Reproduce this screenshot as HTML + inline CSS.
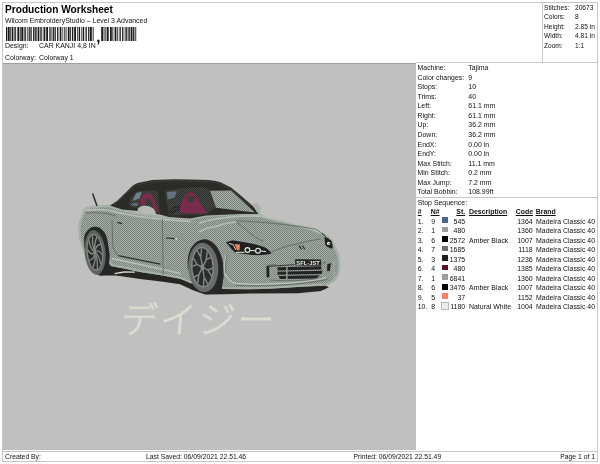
<!DOCTYPE html>
<html><head><meta charset="utf-8">
<style>
html,body{margin:0;padding:0;background:#fff;}
body{width:600px;height:464px;position:relative;overflow:hidden;font-family:"Liberation Sans",sans-serif;font-size:6.95px;color:#111;}
.t{position:absolute;white-space:nowrap;line-height:9px;}
.frame{position:absolute;left:2px;top:2px;width:596px;height:460px;border:1px solid #c8c8c8;box-sizing:border-box;}
.panel{position:absolute;left:3px;top:62.5px;width:413.3px;height:387.1px;background:#c0c0c0;border-top:1px solid #a0a0a0;box-sizing:border-box;}
.hl{position:absolute;height:1px;background:#c8c8c8;}
.vl{position:absolute;width:1px;background:#c8c8c8;}
h1{position:absolute;left:5px;top:3.7px;margin:0;font-size:10.15px;line-height:12px;font-weight:bold;color:#000;white-space:nowrap;}
.sw{position:absolute;width:6.5px;height:5.7px;}
.r{text-align:right;}
.s{font-size:6.6px;}
.f{font-size:6.8px;}
u{text-decoration:underline;}
b{font-weight:bold;}
#w{position:absolute;left:0;top:0;width:600px;height:464px;will-change:transform;}
</style></head><body><div id="w">
<div class="frame"></div>
<div class="panel"></div>
<h1>Production Worksheet</h1>
<div class="t" style="left:5px;top:15.5px">Wilcom EmbroideryStudio – Level 3 Advanced</div>
<div class="t" style="left:5px;top:41px">Design:</div><div class="t" style="left:39px;top:41px">CAR KANJI 4,8 IN</div>
<div class="t" style="left:5px;top:53px">Colorway:</div><div class="t" style="left:39px;top:53px">Colorway 1</div>
<!--STATIC-->
<svg style="position:absolute;left:0;top:0" width="150" height="46" viewBox="0 0 150 46"><g fill="#1a1a1a"><rect x="6.00" y="27" width="1.30" height="14"/><rect x="7.90" y="27" width="1.80" height="14"/><rect x="10.30" y="27" width="0.90" height="14"/><rect x="11.80" y="27" width="1.30" height="14"/><rect x="13.70" y="27" width="0.90" height="14"/><rect x="15.20" y="27" width="0.90" height="14"/><rect x="17.40" y="27" width="1.80" height="14"/><rect x="19.80" y="27" width="0.90" height="14"/><rect x="21.30" y="27" width="1.80" height="14"/><rect x="23.70" y="27" width="0.90" height="14"/><rect x="25.20" y="27" width="0.90" height="14"/><rect x="27.40" y="27" width="0.90" height="14"/><rect x="28.90" y="27" width="0.90" height="14"/><rect x="30.40" y="27" width="1.30" height="14"/><rect x="33.00" y="27" width="0.90" height="14"/><rect x="34.50" y="27" width="1.30" height="14"/><rect x="36.40" y="27" width="0.90" height="14"/><rect x="37.90" y="27" width="1.30" height="14"/><rect x="39.80" y="27" width="0.90" height="14"/><rect x="41.30" y="27" width="0.90" height="14"/><rect x="43.50" y="27" width="1.80" height="14"/><rect x="46.20" y="27" width="1.80" height="14"/><rect x="49.30" y="27" width="1.30" height="14"/><rect x="51.50" y="27" width="0.90" height="14"/><rect x="53.00" y="27" width="0.90" height="14"/><rect x="54.50" y="27" width="1.30" height="14"/><rect x="57.10" y="27" width="1.30" height="14"/><rect x="59.70" y="27" width="1.30" height="14"/><rect x="61.60" y="27" width="0.90" height="14"/><rect x="63.80" y="27" width="0.90" height="14"/><rect x="65.60" y="27" width="0.90" height="14"/><rect x="67.80" y="27" width="1.80" height="14"/><rect x="70.20" y="27" width="0.90" height="14"/><rect x="72.00" y="27" width="1.30" height="14"/><rect x="74.20" y="27" width="1.80" height="14"/><rect x="77.30" y="27" width="0.90" height="14"/><rect x="78.80" y="27" width="1.30" height="14"/><rect x="81.40" y="27" width="0.90" height="14"/><rect x="82.90" y="27" width="1.30" height="14"/><rect x="85.50" y="27" width="1.30" height="14"/><rect x="88.10" y="27" width="1.30" height="14"/><rect x="90.00" y="27" width="1.80" height="14"/><rect x="92.70" y="27" width="0.90" height="14"/><rect x="101.20" y="27" width="1.80" height="14"/><rect x="103.60" y="27" width="0.90" height="14"/><rect x="105.40" y="27" width="0.90" height="14"/><rect x="106.90" y="27" width="1.80" height="14"/><rect x="110.00" y="27" width="1.80" height="14"/><rect x="112.40" y="27" width="0.90" height="14"/><rect x="114.60" y="27" width="1.80" height="14"/><rect x="117.30" y="27" width="0.90" height="14"/><rect x="119.50" y="27" width="1.30" height="14"/><rect x="122.10" y="27" width="1.30" height="14"/><rect x="124.70" y="27" width="0.90" height="14"/><rect x="126.20" y="27" width="0.90" height="14"/><rect x="127.70" y="27" width="0.90" height="14"/><rect x="129.20" y="27" width="0.90" height="14"/><rect x="130.70" y="27" width="1.80" height="14"/><rect x="133.10" y="27" width="1.30" height="14"/><rect x="135.30" y="27" width="0.90" height="14"/></g></svg>
<div class="t" id="comma" style="left:96.2px;top:28.5px;font-size:15px;font-weight:bold;line-height:16px">,</div>

<div class="t" style="left:417.5px;top:63.20px">Machine:</div><div class="t" style="left:468.3px;top:63.20px">Tajima</div>
<div class="t" style="left:417.5px;top:72.74px">Color changes:</div><div class="t" style="left:468.3px;top:72.74px">9</div>
<div class="t" style="left:417.5px;top:82.28px">Stops:</div><div class="t" style="left:468.3px;top:82.28px">10</div>
<div class="t" style="left:417.5px;top:91.82px">Trims:</div><div class="t" style="left:468.3px;top:91.82px">40</div>
<div class="t" style="left:417.5px;top:101.36px">Left:</div><div class="t" style="left:468.3px;top:101.36px">61.1 mm</div>
<div class="t" style="left:417.5px;top:110.90px">Right:</div><div class="t" style="left:468.3px;top:110.90px">61.1 mm</div>
<div class="t" style="left:417.5px;top:120.44px">Up:</div><div class="t" style="left:468.3px;top:120.44px">36.2 mm</div>
<div class="t" style="left:417.5px;top:129.98px">Down:</div><div class="t" style="left:468.3px;top:129.98px">36.2 mm</div>
<div class="t" style="left:417.5px;top:139.52px">EndX:</div><div class="t" style="left:468.3px;top:139.52px">0.00 in</div>
<div class="t" style="left:417.5px;top:149.06px">EndY:</div><div class="t" style="left:468.3px;top:149.06px">0.00 in</div>
<div class="t" style="left:417.5px;top:158.60px">Max Stitch:</div><div class="t" style="left:468.3px;top:158.60px">11.1 mm</div>
<div class="t" style="left:417.5px;top:168.14px">Min Stitch:</div><div class="t" style="left:468.3px;top:168.14px">0.2 mm</div>
<div class="t" style="left:417.5px;top:177.68px">Max Jump:</div><div class="t" style="left:468.3px;top:177.68px">7.2 mm</div>
<div class="t" style="left:417.5px;top:187.22px">Total Bobbin:</div><div class="t" style="left:468.3px;top:187.22px">108.99ft</div>
<div class="t s" style="left:544px;top:2.70px">Stitches:</div><div class="t s" style="left:575px;top:2.70px">20673</div>
<div class="t s" style="left:544px;top:12.20px">Colors:</div><div class="t s" style="left:575px;top:12.20px">8</div>
<div class="t s" style="left:544px;top:21.70px">Height:</div><div class="t s" style="left:575px;top:21.70px">2.85 in</div>
<div class="t s" style="left:544px;top:31.20px">Width:</div><div class="t s" style="left:575px;top:31.20px">4.81 in</div>
<div class="t s" style="left:544px;top:40.70px">Zoom:</div><div class="t s" style="left:575px;top:40.70px">1:1</div>
<div class="hl" style="left:416px;top:62.2px;width:182px"></div>
<div class="vl" style="left:542px;top:3px;height:60px"></div>
<div class="hl" style="left:416px;top:196.5px;width:182px"></div>
<div class="hl" style="left:3px;top:451px;width:595px"></div>
<div class="t" style="left:417.7px;top:197.7px">Stop Sequence:</div>
<div class="t" style="left:417.7px;top:207.3px"><b><u>#</u></b></div><div class="t" style="left:430.7px;top:207.3px"><b><u>N#</u></b></div><div class="t r" style="left:435px;width:30.2px;top:207.3px"><b><u>St.</u></b></div><div class="t" style="left:469px;top:207.3px"><b><u>Description</u></b></div><div class="t" style="left:515.7px;top:207.3px"><b><u>Code</u></b></div><div class="t" style="left:535.7px;top:207.3px"><b><u>Brand</u></b></div>
<div class="t" style="left:417.7px;top:216.50px">1.</div><div class="t" style="left:431.2px;top:216.50px">9</div><div class="sw" style="left:441.7px;top:217.00px;background:#4f648c"></div><div class="t r" style="left:435px;width:30.2px;top:216.50px">545</div><div class="t" style="left:469px;top:216.50px"></div><div class="t r" style="left:500px;width:32.7px;top:216.50px">1364</div><div class="t" style="left:536px;top:216.50px">Madeira Classic 40</div>
<div class="t" style="left:417.7px;top:226.05px">2.</div><div class="t" style="left:431.2px;top:226.05px">1</div><div class="sw" style="left:441.7px;top:226.55px;background:#9a9ea0"></div><div class="t r" style="left:435px;width:30.2px;top:226.05px">480</div><div class="t" style="left:469px;top:226.05px"></div><div class="t r" style="left:500px;width:32.7px;top:226.05px">1360</div><div class="t" style="left:536px;top:226.05px">Madeira Classic 40</div>
<div class="t" style="left:417.7px;top:235.60px">3.</div><div class="t" style="left:431.2px;top:235.60px">6</div><div class="sw" style="left:441.7px;top:236.10px;background:#000000"></div><div class="t r" style="left:435px;width:30.2px;top:235.60px">2572</div><div class="t" style="left:469px;top:235.60px">Amber Black</div><div class="t r" style="left:500px;width:32.7px;top:235.60px">1007</div><div class="t" style="left:536px;top:235.60px">Madeira Classic 40</div>
<div class="t" style="left:417.7px;top:245.15px">4.</div><div class="t" style="left:431.2px;top:245.15px">7</div><div class="sw" style="left:441.7px;top:245.65px;background:#6f7377"></div><div class="t r" style="left:435px;width:30.2px;top:245.15px">1685</div><div class="t" style="left:469px;top:245.15px"></div><div class="t r" style="left:500px;width:32.7px;top:245.15px">1118</div><div class="t" style="left:536px;top:245.15px">Madeira Classic 40</div>
<div class="t" style="left:417.7px;top:254.70px">5.</div><div class="t" style="left:431.2px;top:254.70px">3</div><div class="sw" style="left:441.7px;top:255.20px;background:#1e1e20"></div><div class="t r" style="left:435px;width:30.2px;top:254.70px">1375</div><div class="t" style="left:469px;top:254.70px"></div><div class="t r" style="left:500px;width:32.7px;top:254.70px">1236</div><div class="t" style="left:536px;top:254.70px">Madeira Classic 40</div>
<div class="t" style="left:417.7px;top:264.25px">6.</div><div class="t" style="left:431.2px;top:264.25px">4</div><div class="sw" style="left:441.7px;top:264.75px;background:#5a0f2c"></div><div class="t r" style="left:435px;width:30.2px;top:264.25px">480</div><div class="t" style="left:469px;top:264.25px"></div><div class="t r" style="left:500px;width:32.7px;top:264.25px">1385</div><div class="t" style="left:536px;top:264.25px">Madeira Classic 40</div>
<div class="t" style="left:417.7px;top:273.80px">7.</div><div class="t" style="left:431.2px;top:273.80px">1</div><div class="sw" style="left:441.7px;top:274.30px;background:#9a9ea0"></div><div class="t r" style="left:435px;width:30.2px;top:273.80px">6841</div><div class="t" style="left:469px;top:273.80px"></div><div class="t r" style="left:500px;width:32.7px;top:273.80px">1360</div><div class="t" style="left:536px;top:273.80px">Madeira Classic 40</div>
<div class="t" style="left:417.7px;top:283.35px">8.</div><div class="t" style="left:431.2px;top:283.35px">6</div><div class="sw" style="left:441.7px;top:283.85px;background:#000000"></div><div class="t r" style="left:435px;width:30.2px;top:283.35px">3476</div><div class="t" style="left:469px;top:283.35px">Amber Black</div><div class="t r" style="left:500px;width:32.7px;top:283.35px">1007</div><div class="t" style="left:536px;top:283.35px">Madeira Classic 40</div>
<div class="t" style="left:417.7px;top:292.90px">9.</div><div class="t" style="left:431.2px;top:292.90px">5</div><div class="sw" style="left:441.7px;top:293.40px;background:#f7825f"></div><div class="t r" style="left:435px;width:30.2px;top:292.90px">37</div><div class="t" style="left:469px;top:292.90px"></div><div class="t r" style="left:500px;width:32.7px;top:292.90px">1152</div><div class="t" style="left:536px;top:292.90px">Madeira Classic 40</div>
<div class="t" style="left:417.7px;top:302.45px">10.</div><div class="t" style="left:431.2px;top:302.45px">8</div><div class="sw" style="left:441.7px;top:302.95px;background:#ececf2;outline:0.5px solid #b8b8c0"></div><div class="t r" style="left:435px;width:30.2px;top:302.45px">1180</div><div class="t" style="left:469px;top:302.45px">Natural White</div><div class="t r" style="left:500px;width:32.7px;top:302.45px">1004</div><div class="t" style="left:536px;top:302.45px">Madeira Classic 40</div>
<div class="t f" style="left:5px;top:451.6px">Created By:</div><div class="t f" style="left:146px;top:451.6px">Last Saved: 06/09/2021 22.51.46</div><div class="t f" style="left:353.5px;top:451.6px">Printed: 06/09/2021 22.51.49</div><div class="t r f" style="left:500px;width:95px;top:451.6px">Page 1 of 1</div>

<!--/STATIC-->
<!--CAR-->
<svg style="position:absolute;left:0;top:0" width="600" height="464" viewBox="0 0 600 464">
<defs>
<pattern id="tx" width="2" height="2" patternUnits="userSpaceOnUse"><rect width="2" height="2" fill="#a5afa6"/><rect width="1" height="1" fill="#79837c"/><rect x="1" y="1" width="1" height="1" fill="#79837c"/></pattern>
<pattern id="txd" width="2" height="2" patternUnits="userSpaceOnUse"><rect width="2" height="2" fill="#484b49"/><rect width="1" height="1" fill="#2c2e2c"/><rect x="1" y="1" width="1" height="1" fill="#2c2e2c"/></pattern>
</defs>
<!-- ground shadow -->
<path d="M108 264 L125 267.5 L140 271 L161 274.3 L180 277.7 L188 281 L210 287 L250 287 L322 284 L329 287.3 L321 291 L298 293.3 L250 293.5 L225 294.2 L205 294.6 L193 290.3 L180 284.3 L161 281.5 L140 278.9 L125 276.8 L116 275.4 L100 275.5 L95 272 Z" fill="#262724"/>
<path d="M114.6 273.6 L124 272 L135 272.2" stroke="#d9ded2" stroke-width="1.3" fill="none"/>
<!-- antenna -->
<path d="M92.6 193.5 L97.2 206.4" stroke="#2b2b2b" stroke-width="1.5" fill="none"/>
<!-- body -->
<path id="body" d="M85 208 L90.7 206.5 L107 205 L110 205.6 L122 209.4 L136 212.5 L164 216.5 L190 218 L206 215 L240 213 L258 213 C262 215 266 217 270 218 L285 221 L301 225.6 L312.5 228.7 L322.5 232.5 C326 234 331 238 333.7 242.5 L337.5 251 C339.5 256 340.5 262 340 268.7 C339.5 273 338.5 276 337 278 C335 281 331 284 326 285.4 L297.5 287 L273.7 288.5 L250 289.3 L224 289 L190 283 L188 282 L180 278.7 L161 275.3 L140 272 L125 268.8 L110.8 266 L109 262 L90 258 L85 255 L81.7 247 L79 238 L78.5 227.8 L79.8 220 L82.6 212.5 Z" fill="url(#tx)"/>
<!-- body lines -->
<clipPath id="bc"><path d="M85 208 L90.7 206.5 L107 205 L110 205.6 L122 209.4 L136 212.5 L164 216.5 L190 218 L206 215 L240 213 L258 213 C262 215 266 217 270 218 L285 221 L301 225.6 L312.5 228.7 L322.5 232.5 C326 234 331 238 333.7 242.5 L337.5 251 C339.5 256 340.5 262 340 268.7 C339.5 273 338.5 276 337 278 C335 281 331 284 326 285.4 L297.5 287 L273.7 288.5 L250 289.3 L224 289 L190 283 L188 282 L180 278.7 L161 275.3 L140 272 L125 268.8 L110.8 266 L109 262 L90 258 L85 255 L81.7 247 L79 238 L78.5 227.8 L79.8 220 L82.6 212.5 Z"/></clipPath>
<path d="M85 208 L90.7 206.5 L107 205 L110 205.6 L122 209.4 L136 212.5 L164 216.5 L190 218 L206 215 L240 213 L258 213 C262 215 266 217 270 218 L285 221 L301 225.6 L312.5 228.7 L322.5 232.5 C326 234 331 238 333.7 242.5 L337.5 251 C339.5 256 340.5 262 340 268.7 C339.5 273 338.5 276 337 278 C335 281 331 284 326 285.4 L297.5 287 L273.7 288.5 L250 289.3 L224 289 L190 283 L188 282 L180 278.7 L161 275.3 L140 272 L125 268.8 L110.8 266 L109 262 L90 258 L85 255 L81.7 247 L79 238 L78.5 227.8 L79.8 220 L82.6 212.5 Z" fill="none" stroke="#a7b1a8" stroke-width="4" clip-path="url(#bc)"/>
<g stroke="#b7c1b7" stroke-width="1.6" fill="none" stroke-linecap="round">
<path d="M86 210.5 C96 209 106 209.5 112 211 C122 214 135 216 150 218 L164 219.5 L190 221.5"/>
<path d="M200 223 C208 219.5 224 217.5 240 216.3 L260 216 C278 219.5 296 223.5 309 227.5 C316 230 322 233.5 325.7 237.5"/>
<path d="M200 231.6 C205 228.5 210 227 214.5 226.7 C222 224 230 222.5 236 222"/>
<path d="M112 258.5 L140 264.5 L161 269 L180 273.5"/>
<path d="M226 256 C224.5 262 224 268 224.5 273 C227 279 231 282.5 236 283.5 C262 285.5 300 283.5 325 278"/>
</g>
<g stroke="#5b655e" stroke-width="0.8" fill="none">
<path d="M112 220 C112.3 230 112.5 240 112.8 245.8 C113.5 250 115.5 253.5 118.3 255.5"/>
<path d="M162.3 219 C162.6 235 162.9 255 163.2 275"/>
<path d="M236 222 C241 225 245 228.5 248 231.6 C253 236 258 239 263 241.3"/>
<path d="M236 220.7 C262 221.8 292 224.8 316 229.2 C320 231.5 323.5 235 325.7 238.8"/>
<path d="M270 252.2 C279 248.5 288 245.8 296.7 243.7 C305 241.8 313 240.2 320.8 238.8"/>
<path d="M85.5 213 C96 212 108 213 116 216"/>
<path d="M227 255 C225.5 262 225.3 268 226 273"/>
<path d="M236 285.3 C262 287 300 285 327 279.5"/>
<path d="M266.5 265.4 L276 264.6 M322 262.8 L325.7 262.6"/>
</g>
<path d="M334 260.6 L334.2 277.5" stroke="#c3ccc2" stroke-width="0.8" stroke-dasharray="1 1" fill="none"/>
<path d="M118.3 255.6 L140 260.2 L160.4 264.2" stroke="#2d2e2c" stroke-width="1.2" fill="none"/>
<path d="M166 238 L175 238.6" stroke="#2d2e2c" stroke-width="1.2" fill="none"/><path d="M175 238.6 L177 238.8" stroke="#e8ebe6" stroke-width="1.2"/>
<path d="M117.4 222.3 L122 223.6" stroke="#2d2e2c" stroke-width="1.2" fill="none"/>
<!-- roof + glass area -->
<path d="M110 205.6 L117 201 L124.5 193.7 L131 187.2 C134 184.5 137 183 140 182.6 L152.5 180 L175 179.3 L190 179.5 L208.7 180 C214 180.5 218 181.3 221 182.6 L231 187.6 L242.5 197 L252.5 205.7 L258 212.6 L258 214 L240 214 L206 215.5 L190 218.5 L169 217 L159.4 214.5 L137.5 211 L122 209.4 Z" fill="#2b2c28"/>
<path d="M113 205 L119 200.5 L126 193.8 L132 188 C135 185.5 138 184.3 141 183.9 L153 181.5 L175 180.8 L208 181.4 C213 181.9 217 182.6 220 183.8 L230 188.8 L241 197.8 L251 206.5" fill="none" stroke="#45473f" stroke-width="0.7"/>
<!-- side window -->
<path d="M131 197 L137.5 191.2 L157.5 190.4 L160 213 L150 211.5 L138 209.5 L129 205.5 Z" fill="url(#txd)"/>
<path d="M136 193 L142 191.8 L139.5 198.5 L132.5 201 Z" fill="#6d7e8c"/><path d="M132 203.5 L138 202.5 L137.5 206 L131.5 205.5 Z" fill="#5d6c78"/>
<!-- windshield dark part (interior) -->
<path d="M164.5 190.3 L200 186.8 L209 188.5 L215 207.5 L206 214.5 L169 215.5 Z" fill="url(#txd)"/>
<path d="M169.5 213 C171 208.5 175 206.3 180 206.5 M171.5 214.5 C173 211 176 209.3 180 209.5" stroke="#232423" stroke-width="1.1" fill="none"/>
<path d="M167 192 L177 191.3 L174.5 197.5 L167.5 199.5 Z" fill="#62727f"/>
<!-- seats -->
<path d="M140 205 C140 198 143 193.5 147 193 C152 192.5 154 198 156 204.5 L158.5 213 L154 212 C153 205 151 198.5 148 198.5 C145.5 198.5 145 203 144.5 206 Z" fill="#7a2a4b"/>
<path d="M180 207.5 C182 200 185 193.5 190.5 192.3 C195 192 197 196 198 200 L207 213 L190 213.5 L180 212.5 Z M190.6 195.2 a3.5 3.7 0 1 0 0.01 0 Z" fill="#7a2a4b" fill-rule="evenodd"/>
<!-- windshield light part -->
<path d="M210 190.8 L231 190.5 L255 212.4 L216 207.8 Z" fill="url(#tx)"/>
<!-- mirrors -->
<path d="M137.5 211 C137.5 207.5 141 205.5 146 205.8 C151 206 155.5 209 156 214.5 L147 213.5 Z" fill="#b4bdb3"/>
<path d="M253 205 C255 202 259 203 260.5 207 C261.5 209.5 261 212 259.5 213.5 L257 212.5 Z" fill="#a9b2a9"/>
<!-- rear wheel -->
<path d="M84.2 247 L84.2 236.9 C85 233 86.5 231 88.3 229.7 C90 228 92 226.8 94.2 226.8 C96.5 226.6 98.5 227 100.2 228 C102 229.5 103.7 231 104.9 233.3 C106.5 236 107.3 239 107.9 242.8 L109.7 254.7 L109 266.5 L106.7 274.8 L100 275.5 L92 272 Z" fill="#272826"/>
<g transform="rotate(-5 95.1 252.5)">
<ellipse cx="95.1" cy="252.5" rx="10.4" ry="22.3" fill="#5f635f"/>
<ellipse cx="94.9" cy="252.3" rx="8.3" ry="18.4" fill="#858c85"/>
<ellipse cx="94.9" cy="252.3" rx="7.1" ry="17.1" fill="#2c2e2c"/>
<g stroke="#838a83" stroke-width="1.3" fill="none" stroke-linecap="round"><path d="M96.1 253.2 Q98.8 256.3 99.7 264.2"/><path d="M95.7 254.8 Q97.1 261.1 95.9 268.7"/><path d="M94.9 255.4 Q94.5 262.5 91.7 267.0"/><path d="M94.2 254.8 Q92.1 260.1 88.7 259.6"/><path d="M93.7 253.3 Q90.8 254.6 88.1 249.5"/><path d="M93.7 251.4 Q91.0 248.3 90.1 240.4"/><path d="M94.1 249.8 Q92.7 243.5 93.9 235.9"/><path d="M94.9 249.2 Q95.3 242.1 98.1 237.6"/><path d="M95.6 249.8 Q97.7 244.5 101.1 245.0"/><path d="M96.1 251.3 Q99.0 250.0 101.7 255.1"/></g>
<ellipse cx="94.9" cy="252.3" rx="1.6" ry="2.4" fill="#838a83"/>
</g>
<!-- front wheel -->
<path d="M187.7 268 L187.7 260 C188 256 189 252.5 190.3 249.4 C192 246 194.5 243 197.7 241.3 C200 240 203 239.2 205.7 239.3 C208.5 239.8 211.5 241.2 213.7 243.3 C216 245.5 218.3 248.5 219.7 252 C221.3 255.5 222.5 259 223 262.7 L223.7 276 L221.7 289.4 L212 294 L200 291 Z" fill="#272826"/>
<g transform="rotate(-3 203.3 267.5)">
<ellipse cx="203.3" cy="267.5" rx="15" ry="24.7" fill="#696d69"/>
<ellipse cx="202.5" cy="267.2" rx="11.3" ry="20.3" fill="#858c85"/>
<ellipse cx="202.5" cy="267.2" rx="10" ry="18.9" fill="#2c2e2c"/>
<g stroke="#838a83" stroke-width="1.4" fill="none" stroke-linecap="round"><path d="M204.2 268.2 L207.8 270.3 L212.2 268.7 M207.8 270.3 L210.9 276.3"/><path d="M202.9 270.5 L203.7 277.3 L206.7 283.8 M203.7 277.3 L202.5 285.5"/><path d="M201.2 269.5 L198.5 274.3 L197.0 282.3 M198.5 274.3 L194.1 276.4"/><path d="M200.8 266.2 L197.2 264.1 L192.8 265.7 M197.2 264.1 L194.1 258.1"/><path d="M202.1 263.9 L201.3 257.1 L198.3 250.6 M201.3 257.1 L202.5 248.9"/><path d="M203.8 264.9 L206.5 260.1 L208.0 252.1 M206.5 260.1 L210.9 258.0"/></g>
<ellipse cx="202.5" cy="267.2" rx="2" ry="3" fill="#838a83"/>
</g>
<!-- left headlight -->
<path d="M226 242.5 C229 241 232 240.5 234 240.6 L246 242.5 C253 243.5 260 245.5 265 247.5 C268 249 270 251 271.5 253.5 C266 255 258 255.5 252.5 255 L236 253 C233 251 229 246 226 242.5 Z" fill="#1f201f"/>
<path d="M234.5 244 L240 244.5 L239.5 250.5 L237 250 Z" fill="#f08462"/>
<path d="M229 243.5 L233 244.5 L236 250" stroke="#e9ece6" stroke-width="0.9" fill="none"/>
<path d="M236 252.3 L244.5 252.3 M250.3 250.5 L255.3 250.8 M260.8 251 L266 251.6" stroke="#eef0ec" stroke-width="1" fill="none"/>
<circle cx="247.5" cy="250" r="2.4" fill="none" stroke="#eef0ec" stroke-width="1.1"/>
<circle cx="258" cy="250.7" r="2.4" fill="none" stroke="#eef0ec" stroke-width="1.1"/>
<!-- right headlight -->
<path d="M324.5 237.5 C327 237 330 239 331.5 242 C333 245 333 247.5 332 248.5 C329 248.5 326 246 325 243 Z" fill="#1f201f"/>
<circle cx="328.6" cy="243.2" r="3.4" fill="#1f201f"/><circle cx="328.6" cy="243.4" r="1.7" fill="#e8ebe6"/><circle cx="329" cy="243.8" r="0.7" fill="#3a3b3a"/>
<path d="M322 233.5 C324 234.5 325.5 236 326.5 238.5" stroke="#2a2b2a" stroke-width="1" fill="none"/>
<!-- emblem -->
<path d="M299 245.6 L301.5 249.4 M302.5 245.6 L304.8 249.4" stroke="#2a2b2a" stroke-width="1.1"/>
<!-- plate -->
<path d="M295 259.3 L321 259.6 L321.3 265.8 L295.3 265.5 Z" fill="#232423"/>
<text x="296.3" y="264.6" font-family="Liberation Sans, sans-serif" font-size="5.6" font-weight="bold" fill="#e6e9e4" textLength="23.5" lengthAdjust="spacingAndGlyphs">SFL-JST</text>
<!-- grille -->
<g fill="#222322">
<path d="M266.4 267 C266.4 265.8 269.2 265.8 269.2 267 L269.4 276.5 C269.4 277.8 266.6 277.8 266.6 276.5 Z"/>
<path d="M277.5 267.2 L321 266.3 L321.5 269.4 L277.5 270.4 Z"/>
<path d="M277.5 271.7 L322.5 270.8 L321.5 274 L277.5 274.8 Z"/>
<path d="M278.5 276 L320 275.3 L316 278.4 L280 278.9 Z"/>
<path d="M327.4 264 L330.9 263.3 L329.7 271.3 L327 270.8 Z"/>
</g>
<rect x="286.2" y="266.8" width="1.4" height="12.2" fill="#98a299"/>
<path d="M269 266.3 L294 264.7" stroke="#2a2b2a" stroke-width="0.9" fill="none"/>
<path d="M270 280 C285 281.5 310 281 322 277.3" stroke="#5f6862" stroke-width="0.8" fill="none"/>
<!-- katakana -->
<text x="0" y="0" font-family="'Liberation Sans','Noto Sans CJK JP',sans-serif" font-size="36.5" font-weight="300" fill="#e0e5d9" stroke="#d3d9cc" stroke-width="1.1" transform="translate(120.6 332.6) skewX(-4)" style="letter-spacing:2.2px">デイジー</text>
</svg>
<!--/CAR-->
</div></body></html>
